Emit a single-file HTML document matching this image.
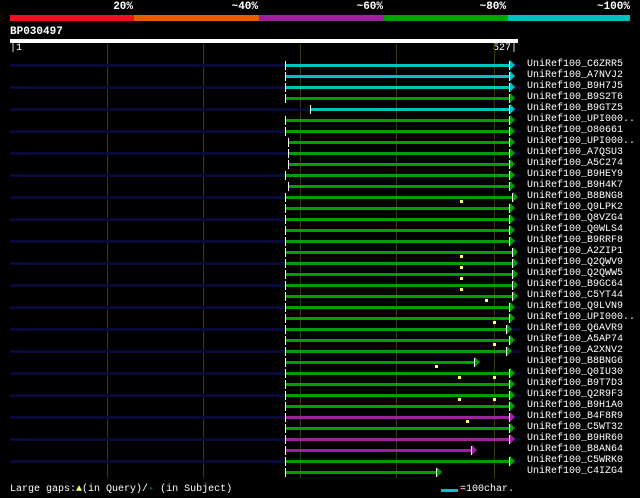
<!DOCTYPE html>
<html><head><meta charset="utf-8"><style>
body{margin:0;background:#000;width:640px;height:498px;position:relative;overflow:hidden;font-family:"Liberation Mono","DejaVu Sans Mono",monospace;color:#fff}
div{position:absolute}
.p{top:1px;font-size:11px;font-weight:bold;width:60px;text-align:right;line-height:12px}
.g{top:44px;height:434px;width:1px;background:#3a3a10}
.n{left:10px;width:510px;height:3px;background:#0a0a3a}
.b{height:3px}
.t{width:1px;height:9px;background:#fff}
.a{width:0;height:0;border-top:5px solid transparent;border-bottom:5px solid transparent}
.l{left:527px;font-size:10px;line-height:12px;white-space:pre}
.y{width:3px;height:3px;background:#ff6}
</style></head><body>
<div class="p" style="left:73px">20%</div>
<div class="p" style="left:198px">~40%</div>
<div class="p" style="left:323px">~60%</div>
<div class="p" style="left:446px">~80%</div>
<div class="p" style="left:570px">~100%</div>
<div style="top:15px;left:10px;width:124px;height:6px;background:#f01020"></div>
<div style="top:15px;left:134px;width:125px;height:6px;background:#e06000"></div>
<div style="top:15px;left:259px;width:125px;height:6px;background:#a020a0"></div>
<div style="top:15px;left:384px;width:124px;height:6px;background:#00a000"></div>
<div style="top:15px;left:508px;width:122px;height:6px;background:#00c0c0"></div>
<div style="top:26px;left:10px;font-size:11px;font-weight:bold;line-height:12px">BP030497</div>
<div style="top:39px;left:10px;width:508px;height:4px;background:#fff"></div>
<div style="top:43px;left:10px;font-size:10px;line-height:12px">|1</div>
<div style="top:43px;left:493px;font-size:10px;line-height:12px">527|</div>
<div class="g" style="left:107px"></div><div class="g" style="left:203px"></div><div class="g" style="left:300px"></div><div class="g" style="left:396px"></div><div class="g" style="left:494px"></div>
<div id="rows"></div>
<script>
var R=[["C6ZRR5","c",285,509],["A7NVJ2","c",285,509],["B9H7J5","c",285,509],["B9S2T6","g",285,509],["B9GTZ5","c",310,509],["UPI000..","g",285,509],["O80661","g",285,509],["UPI000..","g",288,509],["A7QSU3","g",288,509],["A5C274","g",288,509],["B9HEY9","g",285,509],["B9H4K7","g",288,509],["B8BNG8","g",285,512,[460]],["Q9LPK2","g",285,509],["Q8VZG4","g",285,509],["Q0WLS4","g",285,509],["B9RRF8","g",285,509],["A2ZIP1","g",285,512,[460]],["Q2QWV9","g",285,512,[460]],["Q2QWW5","g",285,512,[460]],["B9GC64","g",285,512,[460]],["C5YT44","g",285,512,[485]],["Q9LVN9","g",285,509],["UPI000..","g",285,509,[493]],["Q6AVR9","g",285,506],["A5AP74","g",285,509,[493]],["A2XNV2","g",285,506],["B8BNG6","g",285,474,[435]],["Q0IU30","g",285,509,[458,493]],["B9T7D3","g",285,509],["Q2R9F3","g",285,509,[458,493]],["B9H1A0","g",285,509],["B4F8R9","m",285,509,[466]],["C5WT32","g",285,509],["B9HR60","m",285,509],["B8AN64","m",285,471],["C5WRK0","g",285,509],["C4IZG4","g",285,436]];
var C={c:"#00c0c0",g:"#00a000",m:"#a020a0"},h="";
R.forEach(function(r,i){var c=65+11*i;
if(i%2==0)h+='<div class="n" style="top:'+(c-1)+'px"></div>';
h+='<div class="b" style="top:'+(c-1)+'px;left:'+r[2]+'px;width:'+(r[3]-r[2])+'px;background:'+C[r[1]]+'"></div>';
h+='<div class="t" style="top:'+(c-4)+'px;left:'+r[2]+'px"></div>';
h+='<div class="t" style="top:'+(c-4)+'px;left:'+r[3]+'px"></div>';
h+='<div class="a" style="top:'+(c-5)+'px;left:'+(r[3]+1)+'px;border-left:5px solid '+C[r[1]]+'"></div>';
(r[4]||[]).forEach(function(x){h+='<div class="y" style="top:'+(c+3)+'px;left:'+x+'px"></div>'});
h+='<div class="l" style="top:'+(c-6)+'px">UniRef100_'+r[0]+'</div>';});
document.getElementById("rows").innerHTML=h;
</script>
<div style="top:484px;left:10px;font-size:10px;line-height:12px;white-space:pre">Large gaps:<span style="color:#ff6">▲</span>(in Query)/<span style="color:#0cc">-</span> (in Subject)</div>
<div style="top:489px;left:441px;width:17px;height:3px;background:#00c0c0"></div>
<div style="top:484px;left:460px;font-size:10px;line-height:12px">=100char.</div>
</body></html>
